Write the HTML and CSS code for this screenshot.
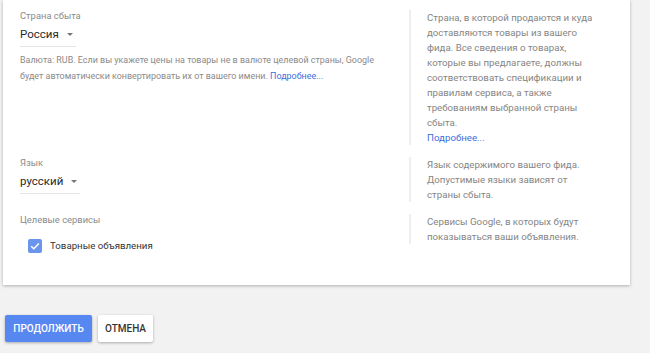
FILE: index.html
```html
<!DOCTYPE html>
<html lang="ru">
<head>
  <meta charset="UTF-8" />
  <title>Настройки фида</title>
  <link rel="stylesheet" href="styles.css">
</head>
<body>

  <div class="card">
    <div class="row">
      <div class="field">
        <div class="label">Страна сбыта</div>
        <div class="select select-country">
          <span>Россия</span>
          <span class="arrow"></span>
        </div>
        <p class="hint">Валюта: RUB. Если вы укажете цены на товары не в валюте целевой страны, Google<br>будет автоматически конвертировать их от вашего имени. <a href="#">Подробнее...</a></p>
      </div>
      <div class="help">
        Страна, в которой продаются и куда доставляются товары из вашего фида. Все сведения о товарах, которые вы предлагаете, должны соответствовать спецификации и правилам сервиса, а также требованиям выбранной страны сбыта.<br>
        <a href="#">Подробнее...</a>
      </div>
    </div>

    <div class="row">
      <div class="field">
        <div class="label">Язык</div>
        <div class="select select-lang">
          <span>русский</span>
          <span class="arrow"></span>
        </div>
      </div>
      <div class="help">
        Язык содержимого вашего фида. Допустимые языки зависят от страны сбыта.
      </div>
    </div>

    <div class="row">
      <div class="field">
        <div class="label">Целевые сервисы</div>
        <label class="check">
          <span class="box">
            <svg width="14" height="14" viewBox="0 0 14 14"><path d="M3.2 7.2 L5.8 9.8 L10.9 4.5" fill="none" stroke="#fff" stroke-width="1.5"/></svg>
          </span>
          Товарные объявления
        </label>
      </div>
      <div class="help">
        Сервисы Google, в которых будут показываться ваши объявления.
      </div>
    </div>
  </div>

  <div class="actions">
    <button class="btn btn-primary">Продолжить</button>
    <button class="btn btn-flat">Отмена</button>
  </div>

</body>
</html>
```

FILE: styles.css
```css
* {
  box-sizing: border-box;
  margin: 0;
  padding: 0;
}

body {
  font-family: Roboto, 'Liberation Sans', sans-serif;
  background: #f2f2f2;
  color: #333;
  width: 650px;
  height: 353px;
  overflow: hidden;
}

.card {
  background: #fff;
  margin-left: 3px;
  width: 627px;
  padding: 10px 30px 32px 17px;
  box-shadow: 0 1px 3px rgba(0, 0, 0, 0.28);
  display: flex;
  flex-direction: column;
  gap: 12px;
}

.row {
  display: flex;
  align-items: flex-start;
}

.field {
  flex: 1;
  min-width: 0;
  padding-right: 8px;
}

.label {
  font-size: 9.4px;
  line-height: 12px;
  color: #8a8a8a;
}

.select {
  display: flex;
  align-items: center;
  gap: 8px;
  margin-top: 6px;
  font-size: 11.5px;
  line-height: 12px;
  color: #2a2a2a;
  border-bottom: 1px solid #e6e6e6;
  padding-bottom: 6px;
}

.select-country {
  width: 56px;
}

.select-lang {
  width: 60px;
}

.arrow {
  width: 0;
  height: 0;
  border-left: 3.5px solid transparent;
  border-right: 3.5px solid transparent;
  border-top: 3.5px solid #777;
  margin-top: 1px;
}

.hint {
  margin-top: 6px;
  font-size: 8.95px;
  line-height: 15.5px;
  color: #8a8a8a;
}

a {
  color: #3b6fde;
  text-decoration: none;
}

.help {
  width: 191px;
  flex-shrink: 0;
  border-left: 2px solid #eeeeee;
  padding-left: 16px;
  font-size: 9.7px;
  line-height: 15px;
  color: #858585;
}

.check {
  display: flex;
  align-items: center;
  gap: 8px;
  margin-top: 13px;
  margin-left: 8px;
  font-size: 9.7px;
  line-height: 14px;
  color: #333;
}

.box {
  width: 14px;
  height: 14px;
  border-radius: 2px;
  background: #6b94ec;
  display: flex;
}

.actions {
  display: flex;
  gap: 6px;
  margin: 30px 0 0 5px;
}

.btn {
  font-family: Roboto, 'Liberation Sans', sans-serif;
  font-size: 10px;
  font-weight: 500;
  text-transform: uppercase;
  height: 27px;
  padding: 0;
  border: none;
  border-radius: 2px;
  box-shadow: 0 1px 3px rgba(0, 0, 0, 0.3);
  cursor: pointer;
}

.btn-primary {
  background: #5787f0;
  color: #fff;
  width: 87px;
}

.btn-flat {
  background: #fff;
  color: #333;
  width: 55px;
}
```
